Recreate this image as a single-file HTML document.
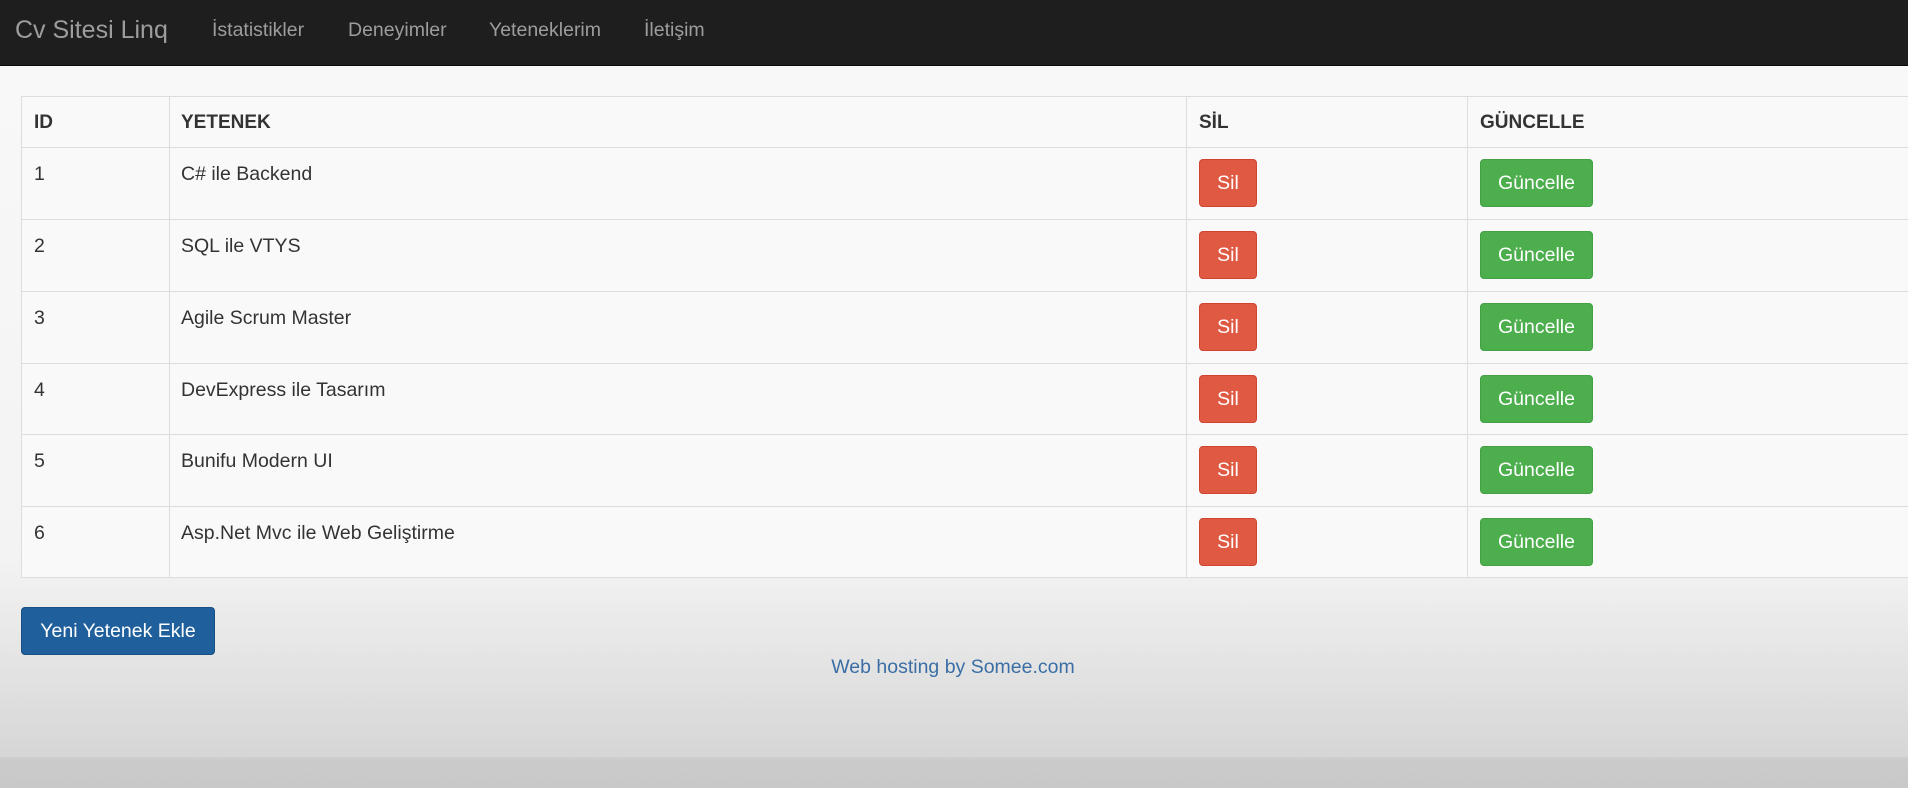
<!DOCTYPE html>
<html><head><meta charset="utf-8"><style>
*{margin:0;padding:0;box-sizing:border-box}
body{width:1908px;height:788px;overflow:hidden;font-family:"Liberation Sans",sans-serif;background:linear-gradient(#fafafa 0px,#f8f8f8 70px,#f3f3f3 560px,#d6d6d6 757px,#cbcbcb 758px,#c8c8c8 788px);position:relative}
.nav{position:absolute;left:0;top:0;width:1908px;height:66px;background:#1e1e1e;border-bottom:1px solid #0a0a0a}
.nav span{position:absolute;top:0;line-height:60px;color:#9d9d9d;font-size:19.5px}
.brand{font-size:25px!important;color:#9d9d9d;left:15px}
.t{position:absolute;left:21px;top:96px;width:1900px;border:1px solid #ddd;background:#f9f9f9}
.r{position:absolute;left:0;width:1900px;border-top:1px solid #ddd;height:72px}
.c{position:absolute;top:0;color:#333;font-size:19.5px}
.v{position:absolute;top:0;bottom:0;width:1px;background:#ddd}
.h{font-weight:bold;font-size:19px}
.sil{position:absolute;left:1199px;width:58px;height:48px;background:#e05a43;border:1px solid #d0452f;border-radius:4px;color:#fff;font-size:19.5px;text-align:center;line-height:46px}
.gn{position:absolute;left:1480px;width:113px;height:48px;background:#4cae4c;border:1px solid #43a043;border-radius:4px;color:#fff;font-size:19.5px;text-align:center;line-height:46px}
</style></head><body>
<div class="nav">
<span class="brand">Cv Sitesi Linq</span>
<span style="left:212px">İstatistikler</span>
<span style="left:348px">Deneyimler</span>
<span style="left:489px">Yeteneklerim</span>
<span style="left:644px">İletişim</span>
</div>
<div class="t" style="height:482px">
<div class="v" style="left:147px"></div>
<div class="v" style="left:1164px"></div>
<div class="v" style="left:1445px"></div>
</div>
<div style="position:absolute;left:21px;top:96px;width:1900px;height:482px">
<div class="c h" style="left:13px;top:16px">ID</div>
<div class="c h" style="left:160px;top:16px">YETENEK</div>
<div class="c h" style="left:1178px;top:16px">SİL</div>
<div class="c h" style="left:1459px;top:16px">GÜNCELLE</div>
</div>
<div style="position:absolute;left:21px;top:0;width:1887px;height:788px">
<div class="r" style="top:147px"><div class="c" style="left:13px;top:15px">1</div><div class="c" style="left:160px;top:15px">C# ile Backend</div></div>
<div class="r" style="top:219px"><div class="c" style="left:13px;top:15px">2</div><div class="c" style="left:160px;top:15px">SQL ile VTYS</div></div>
<div class="r" style="top:291px"><div class="c" style="left:13px;top:15px">3</div><div class="c" style="left:160px;top:15px">Agile Scrum Master</div></div>
<div class="r" style="top:363px"><div class="c" style="left:13px;top:15px">4</div><div class="c" style="left:160px;top:15px">DevExpress ile Tasarım</div></div>
<div class="r" style="top:434px"><div class="c" style="left:13px;top:15px">5</div><div class="c" style="left:160px;top:15px">Bunifu Modern UI</div></div>
<div class="r" style="top:506px"><div class="c" style="left:13px;top:15px">6</div><div class="c" style="left:160px;top:15px">Asp.Net Mvc ile Web Geliştirme</div></div>
</div>
<div class="sil" style="top:159px">Sil</div><div class="gn" style="top:159px">Güncelle</div>
<div class="sil" style="top:231px">Sil</div><div class="gn" style="top:231px">Güncelle</div>
<div class="sil" style="top:303px">Sil</div><div class="gn" style="top:303px">Güncelle</div>
<div class="sil" style="top:375px">Sil</div><div class="gn" style="top:375px">Güncelle</div>
<div class="sil" style="top:446px">Sil</div><div class="gn" style="top:446px">Güncelle</div>
<div class="sil" style="top:518px">Sil</div><div class="gn" style="top:518px">Güncelle</div>
<div style="position:absolute;left:21px;top:607px;width:194px;height:48px;background:#1f5f9c;border:1px solid #184f85;border-radius:4px;color:#fff;font-size:19.5px;text-align:center;line-height:46px">Yeni Yetenek Ekle</div>
<div style="position:absolute;left:0;width:1906px;top:656px;text-align:center;color:#3a6ea5;font-size:19.5px">Web hosting by Somee.com</div>
</body></html>
